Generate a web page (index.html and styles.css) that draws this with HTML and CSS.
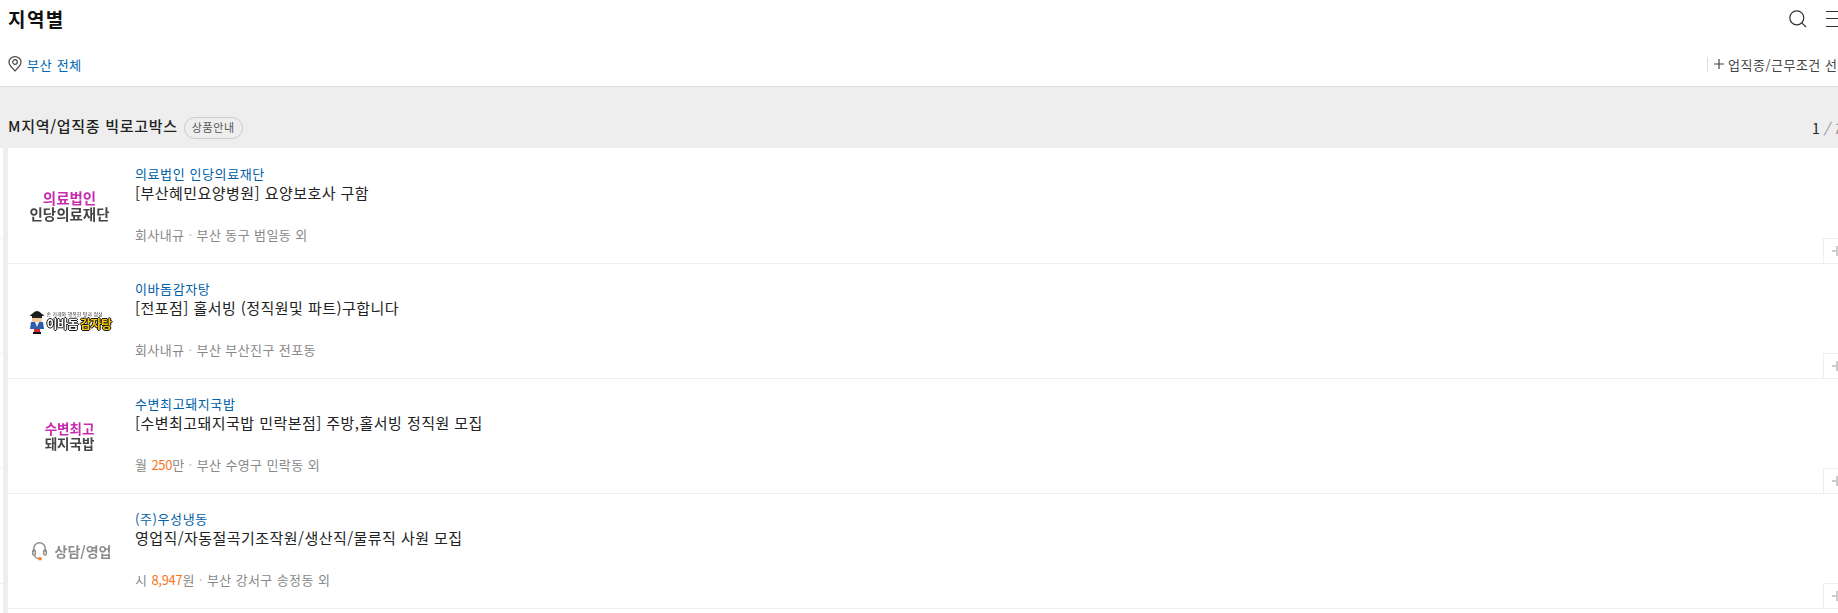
FILE: index.html
```html
<!DOCTYPE html>
<html lang="ko">
<head>
    <meta charset="UTF-8">
    <meta name="viewport" content="width=device-width, initial-scale=1.0">
    <title>지역별</title>
    <link rel="stylesheet" href="styles.css">
</head>
<body>
    <div class="page">
        <header class="top-bar">
            <h1>지역별</h1>
            <div class="top-icons">
                <svg class="icon-search" width="18" height="18" viewBox="0 0 18 18" fill="none" stroke="#333" stroke-width="1.2">
                    <circle cx="7.8" cy="7.8" r="7"/>
                    <path d="M12.800 12.800 L17 17"/>
                </svg>
                <div class="icon-menu"><span></span><span></span><span></span></div>
            </div>
        </header>

        <div class="filter-bar">
            <div class="location">
                <svg width="14" height="16" viewBox="0 0 14 16" fill="none" stroke="#444" stroke-width="1.2">
                    <path d="M7 15 C4.5 11.8 1 9.5 1 6.2 A6 5.6 0 0 1 13 6.2 C13 9.5 9.5 11.8 7 15 Z"/>
                    <circle cx="7" cy="6" r="2.3"/>
                </svg>
                <span>부산 전체</span>
            </div>
            <div class="job-filter">
                <svg width="10" height="10" viewBox="0 0 10 10" stroke="#444" stroke-width="1.2">
                    <path d="M0 5 H10 M5 0 V10"/>
                </svg>
                <span>업직종/근무조건 선택</span>
            </div>
        </div>

        <div class="section-head">
            <div class="section-title">
                <h2>M지역/업직종 빅로고박스</h2>
                <span class="badge">상품안내</span>
            </div>
            <div class="pager"><b>1</b> <i>/</i> <i>7</i></div>
        </div>

        <ul class="job-list">
            <li class="job-row">
                <div class="logo logo-stack">
                    <strong class="pink">의료법인</strong>
                    <strong class="dark">인당의료재단</strong>
                </div>
                <div class="job-info">
                    <p class="company">의료법인 인당의료재단</p>
                    <p class="job-title">[부산혜민요양병원] 요양보호사 구함</p>
                    <p class="meta">회사내규 <em>·</em> 부산 동구 범일동 외</p>
                </div>
                <span class="add-btn"></span>
            </li>
            <li class="job-row">
                <div class="logo logo-ibadom">
                    <svg width="16" height="25" viewBox="0 0 16 25">
                        <path d="M3 5 Q8 -1 13 5 L15.500 6.500 Q8 9 0.500 6.500 Z" fill="#1c1c1c"/>
                        <rect x="3" y="7" width="10" height="6" fill="#f3c9a0"/>
                        <path d="M3 7 H13 V9 H3 Z" fill="#222"/>
                        <path d="M2 13 H14 L15 20 H1 Z" fill="#2a5fb0"/>
                        <path d="M6 13 H10 L8 18 Z" fill="#f4f4f4"/>
                        <rect x="5" y="20" width="6" height="3" fill="#d8262c"/>
                        <rect x="4" y="23" width="8" height="2" fill="#111"/>
                    </svg>
                    <div class="ibadom-text">
                        <small>손 가게와 행복한 맛과 정성</small>
                        <div class="ibadom-name"><span class="ibadom-white">이바돔</span><span class="ibadom-yellow">감자탕</span></div>
                    </div>
                </div>
                <div class="job-info">
                    <p class="company">이바돔감자탕</p>
                    <p class="job-title">[전포점] 홀서빙 (정직원및 파트)구합니다</p>
                    <p class="meta">회사내규 <em>·</em> 부산 부산진구 전포동</p>
                </div>
                <span class="add-btn"></span>
            </li>
            <li class="job-row">
                <div class="logo logo-stack logo-round">
                    <strong class="pink">수변최고</strong>
                    <strong class="dark">돼지국밥</strong>
                </div>
                <div class="job-info">
                    <p class="company">수변최고돼지국밥</p>
                    <p class="job-title">[수변최고돼지국밥 민락본점] 주방,홀서빙 정직원 모집</p>
                    <p class="meta">월 <span class="pay">250</span>만 <em>·</em> 부산 수영구 민락동 외</p>
                </div>
                <span class="add-btn"></span>
            </li>
            <li class="job-row">
                <div class="logo logo-sales">
                    <svg width="15" height="20" viewBox="0 0 15 20" fill="none" stroke="#8c8c8c" stroke-width="1.4">
                        <path d="M1.700 11 V7.500 A5.800 5.800 0 0 1 13.300 7.500 V11"/>
                        <rect x="0.700" y="9" width="2.600" height="5" rx="1.200"/>
                        <rect x="11.700" y="9" width="2.600" height="5" rx="1.200"/>
                        <path d="M2.500 14 Q3 17.500 6.500 17.500"/>
                        <circle cx="8" cy="17.700" r="1.800" fill="#f47b20" stroke="none"/>
                    </svg>
                    <strong>상담/영업</strong>
                </div>
                <div class="job-info">
                    <p class="company">(주)우성냉동</p>
                    <p class="job-title">영업직/자동절곡기조작원/생산직/물류직 사원 모집</p>
                    <p class="meta">시 <span class="pay">8,947</span>원 <em>·</em> 부산 강서구 송정동 외</p>
                </div>
                <span class="add-btn"></span>
            </li>
        </ul>
    </div>
</body>
</html>
```

FILE: styles.css
```css
html, body {
    margin: 0;
    padding: 0;
    height: 613px;
    overflow: hidden;
    background-color: white;
}
body {
    font-family: "Noto Sans CJK KR", "Noto Sans", sans-serif;
    color: #222;
}
.page {
    width: 1870px;
}
h1, h2, p, ul {
    margin: 0;
    padding: 0;
}

/* top */
.top-bar {
    height: 40px;
    display: flex;
    justify-content: space-between;
    align-items: center;
    padding-left: 8px;
}
.top-bar h1 {
    font-size: 19px;
    font-weight: 700;
    letter-spacing: 1.400px;
    color: #111;
    margin-top: -3px;
}
.top-icons {
    display: flex;
    align-items: flex-start;
    gap: 19px;
    margin-top: -3px;
}
.icon-menu {
    width: 44px;
    height: 16px;
    margin-top: 1px;
    display: flex;
    flex-direction: column;
    justify-content: space-between;
}
.icon-menu span {
    height: 1px;
    background-color: #333;
}

.filter-bar {
    height: 46px;
    display: flex;
    justify-content: space-between;
    align-items: center;
    padding: 0 0 0 8px;
    border-bottom: 1px solid #ddd;
    font-size: 13px;
}
.location {
    display: flex;
    align-items: center;
    gap: 5px;
    color: #0068b7;
    letter-spacing: 0.700px;
    margin-top: 2px;
}
.job-filter {
    width: 156px;
    display: flex;
    align-items: center;
    gap: 4px;
    margin-top: 2px;
    padding-left: 6px;
    color: #444;
    white-space: nowrap;
    border-left: 1px solid #ddd;
    letter-spacing: 0.500px;
    line-height: 15px;
}

/* section */
.section-head {
    height: 61px;
    background-color: #eee;
    display: flex;
    justify-content: space-between;
    align-items: flex-end;
    padding-left: 8px;
    box-sizing: border-box;
}
.section-title {
    display: flex;
    align-items: center;
    gap: 6px;
    margin-bottom: 9px;
}
.section-title h2 {
    font-size: 15px;
    font-weight: 500;
    letter-spacing: 0.700px;
    color: #222;
    margin-top: -5px;
}
.badge {
    height: 20px;
    line-height: 19px;
    padding: 0 7px;
    font-size: 11px;
    letter-spacing: 0.700px;
    color: #555;
    border: 1px solid #ccc;
    border-radius: 11px;
}
.pager {
    width: 58px;
    font-size: 14px;
    margin-bottom: 10px;
    color: #222;
}
.pager b {
    font-weight: 400;
}
.pager i {
    color: #888;
}

/* list */
.job-list {
    list-style: none;
    padding-top: 1px;
    padding-left: 8px;
    background:
        linear-gradient(to right, transparent 3px, #eee 3px, #eee 8px, transparent 8px),
        repeating-linear-gradient(to bottom, transparent 0, transparent 90px, #eee 90px, #eee 91px, transparent 91px, transparent 115px);
    background-size: auto, 3px 100%;
    background-repeat: no-repeat;
    height: 464px;
}
.job-row {
    position: relative;
    height: 115px;
    box-sizing: border-box;
    display: flex;
    background-color: white;
    border-bottom: 1px solid #eee;
}
.logo {
    width: 127px;
    flex-shrink: 0;
    display: flex;
    align-items: center;
    justify-content: center;
    filter: blur(0.3px);
}
.job-info {
    padding-top: 15px;
}
.company {
    font-size: 13px;
    line-height: 19px;
    letter-spacing: 0.600px;
    color: #0060a8;
}
.job-title {
    font-size: 15px;
    line-height: 20px;
    letter-spacing: 0.450px;
    color: #222;
}
.meta {
    font-size: 13px;
    line-height: 20px;
    margin-top: 22px;
    letter-spacing: 0.400px;
    color: #888;
}
.meta em {
    font-style: normal;
    color: #bbb;
}
.pay {
    color: #f5751e;
    letter-spacing: -0.300px;
}
.add-btn {
    position: absolute;
    right: 0;
    bottom: 0;
    width: 47px;
    height: 25px;
    box-sizing: border-box;
    border-left: 1px solid #eee;
    border-top: 1px solid #eee;
    background:
        linear-gradient(#ccc, #ccc) 8px 11px / 10px 2px no-repeat,
        linear-gradient(#ccc, #ccc) 12px 7px / 2px 10px no-repeat;
}

/* logos */
.logo-stack {
    flex-direction: column;
    font-size: 14.500px;
    line-height: 16px;
    padding-right: 4px;
    box-sizing: border-box;
}
.logo-stack .pink {
    color: #c72cae;
}
.logo-stack .dark {
    color: #444;
}
.logo-round {
    font-size: 13.500px;
    line-height: 15px;
}
.logo-ibadom {
    gap: 1px;
    padding-right: 2px;
    box-sizing: border-box;
}
.ibadom-text small {
    display: block;
    font-size: 5px;
    line-height: 6px;
    color: #333;
    white-space: nowrap;
}
.ibadom-name {
    display: flex;
    font-size: 12px;
    line-height: 14px;
    font-weight: 700;
}
.ibadom-white {
    color: white;
    text-shadow: -1px 0 #111, 1px 0 #111, 0 -1px #111, 0 1px #111;
    letter-spacing: -0.500px;
}
.ibadom-yellow {
    color: #f8c80c;
    margin-left: 2px;
    text-shadow: -1px 0 #111, 1px 0 #111, 0 -1px #111, 0 1px #111;
    letter-spacing: -0.500px;
}
.logo-sales {
    gap: 8px;
    color: #8c8c8c;
    font-size: 14px;
}
```
